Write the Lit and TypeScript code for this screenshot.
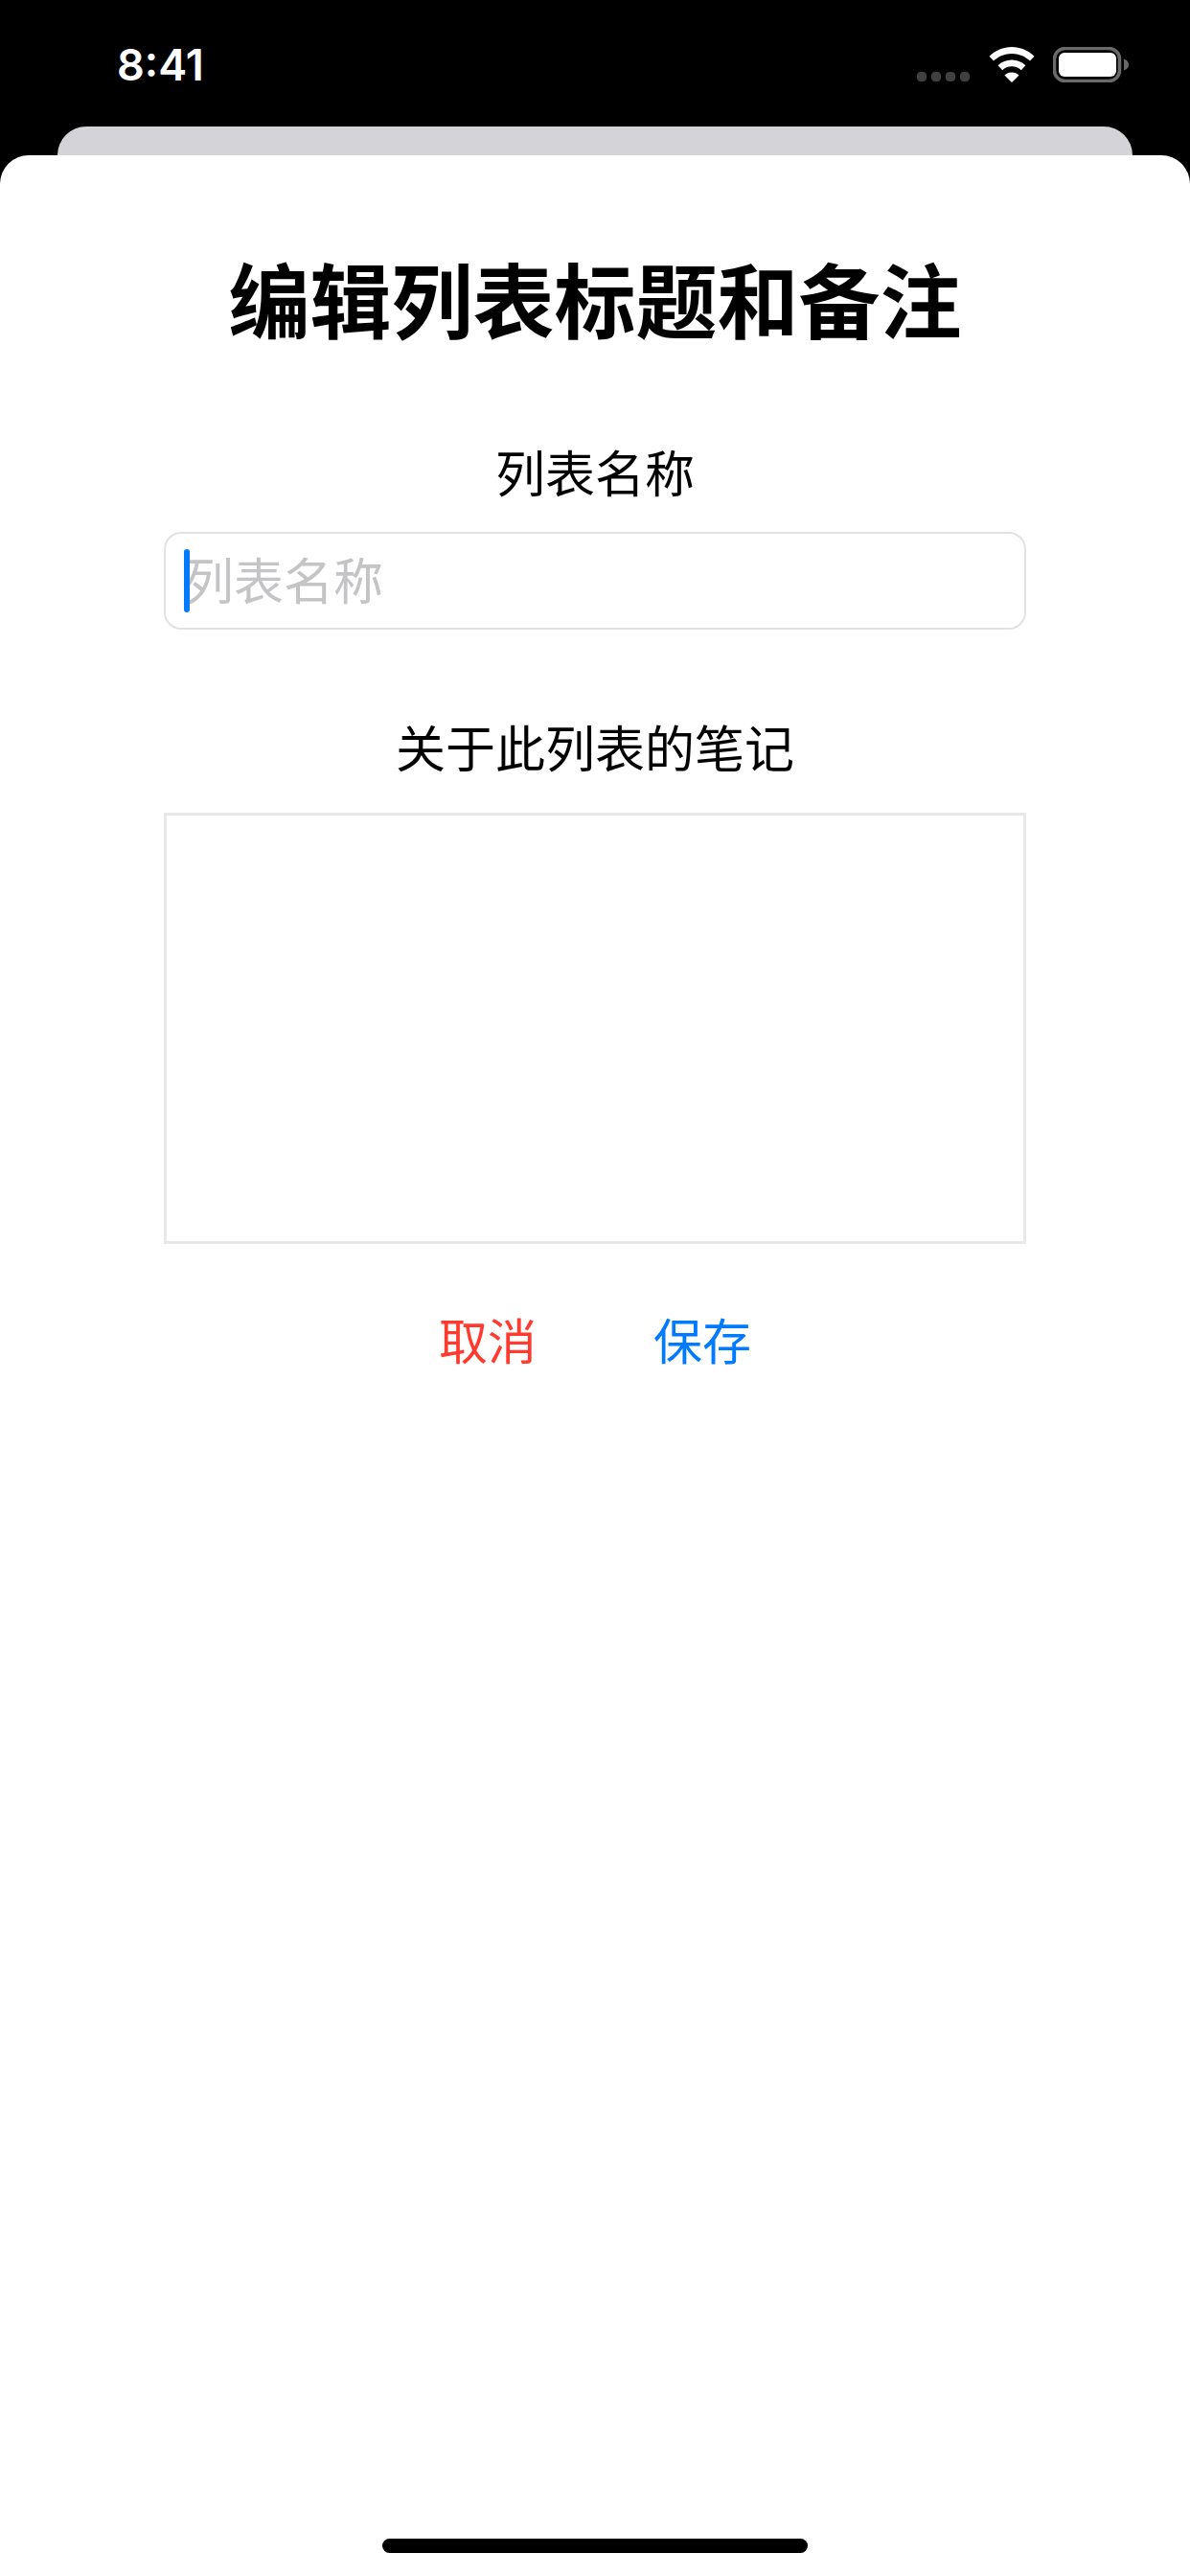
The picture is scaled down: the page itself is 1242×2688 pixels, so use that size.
import { LitElement, html, css } from "lit";
import { customElement } from "lit/decorators.js";

@customElement("app-root")
export class AppRoot extends LitElement {
  static styles = css`
    :host {
      display: block;
      width: 1242px;
      height: 2688px;
      background: #000;
      font-family: "Noto Sans CJK SC", "Inter", sans-serif;
      overflow: hidden;
    }
    .page { display: flex; flex-direction: column; height: 2688px; }
    .status {
      height: 132px;
      flex: none;
      display: flex;
      align-items: flex-start;
      justify-content: space-between;
      padding: 0 63px 0 122px;
      box-sizing: border-box;
      color: #fff;
    }
    .time {
      font-family: "Inter", sans-serif;
      font-weight: 600;
      font-size: 45px;
      line-height: 56px;
      margin-top: 40px;
      letter-spacing: 0;
    }
    .icons { display: flex; align-items: flex-start; margin-top: 49px; }
    .dots { display: flex; gap: 5px; margin-top: 26px; margin-right: 20px; }
    .dot { width: 10px; height: 10px; border-radius: 4px; background: #404040; }
    .wifi { width: 48px; height: 37px; display: block; margin-right: 19px; }
    .battery { width: 80px; height: 37px; display: block; }
    .back {
      flex: none;
      height: 30px;
      margin: 0 60px;
      background: #d4d3d8;
      border-radius: 30px 30px 0 0;
    }
    .sheet {
      flex: 1;
      background: #fff;
      border-radius: 30px 30px 0 0;
      display: flex;
      flex-direction: column;
      align-items: center;
      min-height: 0;
    }
    h1 {
      margin: 92px 0 0;
      font-size: 85px;
      line-height: 112px;
      font-weight: 700;
      color: #000;
    }
    .label {
      font-size: 52px;
      line-height: 68px;
      color: #000;
      text-align: center;
    }
    .name-label { margin-top: 92px; }
    .notes-label { margin-top: 88px; }
    .field {
      position: relative;
      width: 900px;
      height: 102px;
      box-sizing: border-box;
      margin-top: 29px;
      border: 2px solid #e2e2e2;
      border-radius: 18px;
      padding: 0 0 5px 19px;
      display: flex;
      align-items: center;
      font-size: 52px;
      color: #c4c4c6;
    }
    .caret {
      position: absolute;
      left: 19px;
      top: 16px;
      width: 6px;
      height: 66px;
      border-radius: 3px;
      background: #007aff;
    }
    .notes {
      width: 900px;
      height: 450px;
      box-sizing: border-box;
      margin-top: 35px;
      border: 3px solid #e8e8e8;
    }
    .actions {
      display: flex;
      justify-content: center;
      gap: 122px;
      margin-top: 46px;
      font-size: 51px;
      line-height: 106px;
    }
    .cancel { color: #ff3b30; }
    .save { color: #007aff; }
    .home {
      margin-top: auto;
      margin-bottom: 24px;
      width: 444px;
      height: 15px;
      flex: none;
      border-radius: 8px;
      background: #000;
    }
  `;

  render() {
    return html`
      <div class="page">
        <div class="status">
          <div class="time">8:41</div>
          <div class="icons">
            <div class="dots">
              <span class="dot"></span><span class="dot"></span><span class="dot"></span><span class="dot"></span>
            </div>
            <svg class="wifi" viewBox="0 0 48 37">
              <path fill="#fff" d="M24 0C15 0 7 3.5 0.5 9.8L5 14.6C10 9.8 16.6 7 24 7s14 2.8 19 7.6l4.5-4.8C41 3.5 33 0 24 0Z"/>
              <path fill="#fff" d="M24 13.5c-5.6 0-10.6 2.2-14.4 5.8l4.6 4.9c2.6-2.5 6-4 9.8-4s7.2 1.5 9.8 4l4.6-4.9c-3.8-3.6-8.8-5.8-14.4-5.8Z"/>
              <path fill="#fff" d="M24 26.5c-3 0-5.6 1.1-7.6 3L24 37l7.6-7.5c-2-1.9-4.6-3-7.6-3Z"/>
            </svg>
            <svg class="battery" viewBox="0 0 80 37">
              <rect x="1.5" y="1.5" width="68" height="34" rx="11" fill="none" stroke="#6a6a6a" stroke-width="3.5"/>
              <rect x="6" y="6" width="60" height="25" rx="6" fill="#fff"/>
              <path fill="#6a6a6a" d="M74 12.5c3 1 5 3.2 5 6s-2 5-5 6Z"/>
            </svg>
          </div>
        </div>
        <div class="back"></div>
        <div class="sheet">
          <h1>编辑列表标题和备注</h1>
          <div class="label name-label">列表名称</div>
          <div class="field"><span class="caret"></span>列表名称</div>
          <div class="label notes-label">关于此列表的笔记</div>
          <div class="notes"></div>
          <div class="actions">
            <span class="cancel">取消</span>
            <span class="save">保存</span>
          </div>
          <div class="home"></div>
        </div>
      </div>
    `;
  }
}
